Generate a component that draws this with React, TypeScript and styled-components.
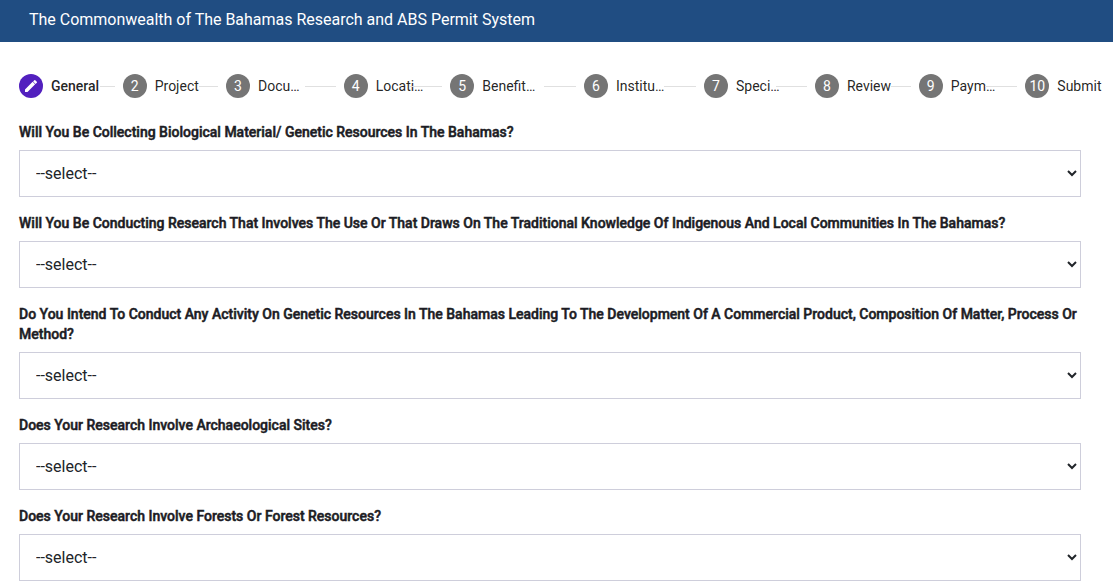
import React from "react";
import styled, { createGlobalStyle } from "styled-components";

const Global = createGlobalStyle`
  *, *::before, *::after { box-sizing: border-box; }
  body { margin: 0; background: #fff; color: #212529; font-family: Roboto, "Liberation Sans", sans-serif; overflow: hidden; }
`;
const Toolbar = styled.header`
  height: 42px; padding: 0 29px 3px; display: flex; align-items: center;
  background: #204d82; color: #fff; font-size: 16px; line-height: 24px; letter-spacing: -0.01px;
`;
const Stepper = styled.nav`
  display: flex; align-items: center; height: 72px; padding: 16px 0 0 19px; margin-bottom: 8px;
`;
const Step = styled.div<{ $width: number }>`
  flex: none; display: flex; align-items: center; width: ${(p) => p.$width}px;
`;
const Badge = styled.span<{ $active?: boolean }>`
  flex: none; width: 24px; height: 24px; border-radius: 50%; display: flex; align-items: center; justify-content: center;
  background: ${(p) => (p.$active ? "#5220be" : "#757575")}; color: #fff; font-size: 14px; line-height: 24px;
`;
const StepLabel = styled.span<{ $active?: boolean }>`
  flex: none; margin-left: 8px; font-size: 14px; line-height: 20px; white-space: nowrap;
  font-weight: ${(p) => (p.$active ? 500 : 400)}; color: rgba(0, 0, 0, 0.87);
`;
const Line = styled.span<{ $gap: number }>`
  flex: 1; height: 1px; background: #e0e0e0; margin: 0 8px 0 ${(p) => p.$gap}px;
`;
const Form = styled.main`padding: 0 32px 0 19px;`;
const Field = styled.div`margin-bottom: 16px;`;
const Question = styled.label`
  display: block; margin-bottom: 8px; font-size: 14px; line-height: 20px; font-weight: 500; color: #1c1c24;
  -webkit-text-stroke: 0.5px #1c1c24;
`;
const Select = styled.select`
  display: block; width: 100%; height: 47px; padding: 0 12px; border: 1px solid #cecedb; border-radius: 0;
  background: #fff; color: #212529; font: 16px Roboto, sans-serif;
`;

const steps = [
  { label: "General", width: 103.7, gap: 1 },
  { label: "Project", width: 103.3, gap: 0 },
  { label: "Docu…", width: 117.7, gap: 5 },
  { label: "Locati…", width: 106.6, gap: -14 },
  { label: "Benefit…", width: 133.7, gap: 9 },
  { label: "Institu…", width: 120, gap: 0 },
  { label: "Speci…", width: 111, gap: -4 },
  { label: "Review", width: 103.8, gap: 0 },
  { label: "Paym…", width: 106.6, gap: -10 },
  { label: "Submit", width: 87.6, gap: 0 },
];
const questions = [
  "Will You Be Collecting Biological Material/ Genetic Resources In The Bahamas?",
  "Will You Be Conducting Research That Involves The Use Or That Draws On The Traditional Knowledge Of Indigenous And Local Communities In The Bahamas?",
  "Do You Intend To Conduct Any Activity On Genetic Resources In The Bahamas Leading To The Development Of A Commercial Product, Composition Of Matter, Process Or Method?",
  "Does Your Research Involve Archaeological Sites?",
  "Does Your Research Involve Forests Or Forest Resources?",
];

function Pencil() {
  return (
    <svg width="16" height="16" viewBox="0 0 24 24" fill="#fff">
      <path d="M3 17.25V21h3.75L18.2 9.55l-3.75-3.75L3 17.25zM20.71 7.04a1 1 0 0 0 0-1.41l-2.34-2.34a1 1 0 0 0-1.41 0l-1.83 1.83 3.75 3.75 1.83-1.83z" />
    </svg>
  );
}

export default function App() {
  return (
    <>
      <Global />
      <Toolbar>The Commonwealth of The Bahamas Research and ABS Permit System</Toolbar>
      <Stepper>
        {steps.map((s, i) => (
          <Step key={s.label} $width={s.width}>
            <Badge $active={i === 0}>{i === 0 ? <Pencil /> : i + 1}</Badge>
            <StepLabel $active={i === 0}>{s.label}</StepLabel>
            {i < steps.length - 1 && <Line $gap={s.gap} />}
          </Step>
        ))}
      </Stepper>
      <Form>
        {questions.map((q, i) => (
          <Field key={q}>
            <Question htmlFor={`q${i}`}>{q}</Question>
            <Select id={`q${i}`}><option>--select--</option></Select>
          </Field>
        ))}
      </Form>
    </>
  );
}
